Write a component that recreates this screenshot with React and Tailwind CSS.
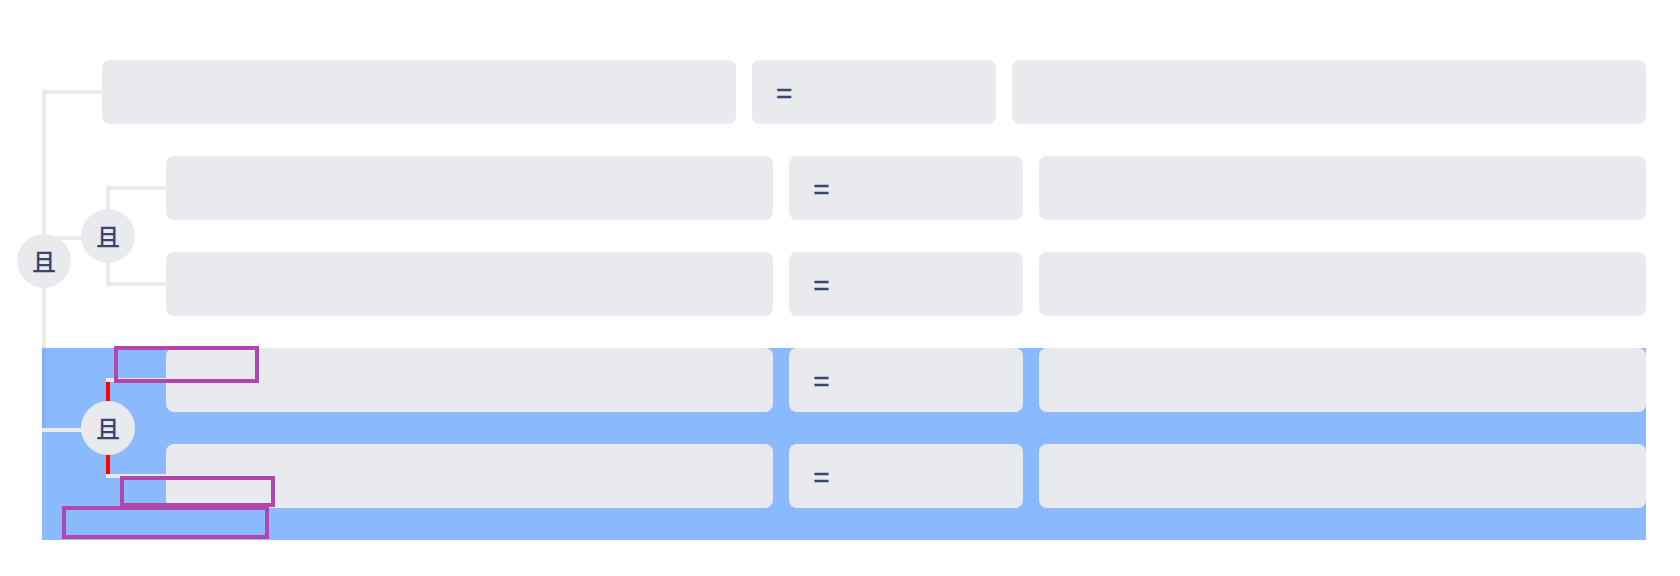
import React from 'react';

// Filter tree: plain rules and nested "且" (AND) groups
const filterTree = {
  rules: [
    { type: 'rule' },
    { type: 'group', rules: [{ type: 'rule' }, { type: 'rule' }] },
    { type: 'group', dragging: true, rules: [{ type: 'rule' }, { type: 'rule' }] },
  ],
};

const ROW_H = 64;
const GAP = 32;
const LINE = 4;

// height of a node and where its connector meets the parent line
function measure(node) {
  if (node.type === 'rule') return { height: ROW_H, anchor: ROW_H / 2 - LINE / 2 };
  let y = 0;
  const anchors = [];
  node.rules.forEach((r, i) => {
    const m = measure(r);
    anchors.push(y + m.anchor);
    y += m.height + (i < node.rules.length - 1 ? GAP : 0);
  });
  const top = anchors[0];
  const bottom = anchors[anchors.length - 1] + LINE;
  return { height: y, anchor: (top + bottom) / 2, top, bottom, anchors };
}

function RuleRow() {
  return (
    <div className="relative grid h-16 grid-cols-[13fr_5fr_13fr] gap-4">
      <div className="absolute -left-[60px] top-[30px] h-1 w-[60px] bg-[#e9eaee]" />
      <div className="rounded-lg bg-[#e9eaee]" />
      <div className="flex items-center rounded-lg bg-[#e9eaee] pl-6 pt-[4px] font-['Liberation_Sans',sans-serif] text-[28px] leading-none text-[#3b4274] [-webkit-text-stroke:0.4px_#3b4274]">
        =
      </div>
      <div className="rounded-lg bg-[#e9eaee]" />
    </div>
  );
}

function Group({ node, root }) {
  const m = measure(node);
  const center = m.anchor;
  const last = m.anchors[m.anchors.length - 1];

  return (
    <div className="relative pl-16">
      {node.dragging && (
        <div className="absolute -bottom-8 -left-[60px] right-0 top-0 bg-[#3c8cfc]/60" />
      )}
      {!root && (
        <div className="absolute -left-[60px] z-10 h-1 w-[60px] bg-[#e9eaee]" style={{ top: center }} />
      )}
      <div
        className="absolute left-1 z-10 w-1 bg-[#e9eaee]"
        style={{ top: m.top, height: m.bottom - m.top }}
      />
      {node.dragging && (
        <div
          className="absolute left-1 z-10 w-1 bg-[#ff0000]"
          style={{ top: m.anchors[0] + 2, height: last - m.anchors[0] }}
        />
      )}

      <div className="relative z-10 flex flex-col gap-8">
        {node.rules.map((r, i) =>
          r.type === 'rule' ? <RuleRow key={i} /> : <Group key={i} node={r} />
        )}
      </div>

      <div
        className="absolute -left-[21px] z-10 flex h-[54px] w-[54px] items-center justify-center rounded-full bg-[#e9eaee] font-['Noto_Sans_CJK_SC',sans-serif] text-[24px] font-medium leading-none text-[#3b4274]"
        style={{ top: center - 27 }}
      >
        且
      </div>

      {node.dragging && (
        <>
          <div className="pointer-events-none absolute left-[12px] -top-[2px] z-20 h-[37px] w-[145px] border-4 border-[#b146ad]" />
          <div className="pointer-events-none absolute left-[18px] top-[128px] z-20 h-[31px] w-[155px] border-4 border-[#b146ad]" />
          <div className="pointer-events-none absolute -left-[40px] top-[158px] z-20 h-[33px] w-[207px] border-4 border-[#b146ad]" />
        </>
      )}
    </div>
  );
}

export default function App() {
  return (
    <div className="h-[576px] w-full bg-white pl-[38px] pr-[34px] pt-[60px]">
      <Group node={filterTree} root />
    </div>
  );
}
